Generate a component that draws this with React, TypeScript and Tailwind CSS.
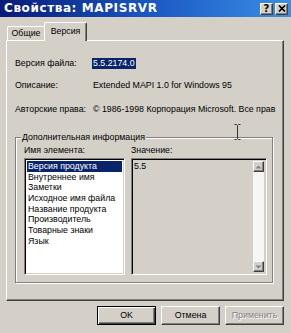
import React from 'react';

const items = [
  'Версия продукта',
  'Внутреннее имя',
  'Заметки',
  'Исходное имя файла',
  'Название продукта',
  'Производитель',
  'Товарные знаки',
  'Язык',
];

const raised = 'border-t border-l border-white border-r border-b border-r-[#404040] border-b-[#404040] shadow-[inset_-1px_-1px_0_#808080]';
const sunken = 'border-t border-l border-[#808080] border-r border-b border-r-white border-b-white shadow-[inset_1px_1px_0_#000,inset_-1px_-1px_0_#d4d0c8]';

function Arrow({ up }: { up?: boolean }) {
  return (
    <svg width="7" height="4" viewBox="0 0 7 4">
      {up ? (
        <path d="M0.5 3.5 L3.5 0.5 L6.5 3.5 Z" fill="#808080" />
      ) : (
        <path d="M0.5 0.5 L3.5 3.5 L6.5 0.5 Z" fill="#808080" />
      )}
    </svg>
  );
}

export default function App() {
  return (
    <div className="w-[291px] h-[333px] bg-[#d4d0c8] flex flex-col overflow-hidden relative text-black font-['Liberation_Sans',Arial,sans-serif] text-[8.8px]">
      {/* title bar */}
      <div className="h-[17px] flex items-center bg-linear-to-r from-[#0a1a78] via-[#1a56c0] to-[#3c8ee6] pl-[4px] pr-[3px]">
        <span className="flex-1 text-white font-bold text-[12px] leading-[13px] tracking-[0.6px] font-['DejaVu_Sans',Verdana,sans-serif]">
          Свойства: MAPISRVR
        </span>
        <div className="flex gap-[2px]">
          <div className={`w-[13px] h-[12px] bg-[#d4d0c8] flex items-center justify-center ${raised}`}>
            <span className="font-bold text-[10px] leading-[10px] font-['DejaVu_Sans',sans-serif]">?</span>
          </div>
          <div className={`w-[13px] h-[12px] bg-[#d4d0c8] flex items-center justify-center ${raised}`}>
            <svg width="8" height="7" viewBox="0 0 8 7">
              <path d="M1 0.5 L7 6.5 M7 0.5 L1 6.5" stroke="#000" strokeWidth="1.7" />
            </svg>
          </div>
        </div>
      </div>

      {/* tabs */}
      <div className="h-[23px] flex items-end pl-[7px]">
        <div className="w-[37px] h-[14px] border-t border-l border-white rounded-tl-[2px] flex items-center justify-center leading-[11px]">
          Общие
        </div>
        <div className="relative z-10 w-[43px] h-[19px] -mb-[1px] bg-[#d4d0c8] border-t border-l border-white border-r border-r-[#404040] shadow-[inset_-1px_0_0_#808080] rounded-t-[2px] flex items-start justify-center pt-[3px] leading-[11px]">
          Версия
        </div>
      </div>

      {/* panel */}
      <div className={`ml-[6px] w-[278px] h-[261px] flex flex-col px-[8px] ${raised}`}>
        <div className="mt-[17px] flex h-[11px] leading-[11px]">
          <span className="w-[78px]">Версия файла:</span>
          <span className="bg-[#0a246a] text-white px-[1px] -ml-[1px]">5.5.2174.0</span>
        </div>
        <div className="mt-[11px] flex h-[11px] leading-[11px]">
          <span className="w-[78px]">Описание:</span>
          <span>Extended MAPI 1.0 for Windows 95</span>
        </div>
        <div className="mt-[13px] flex h-[11px] leading-[11px] whitespace-nowrap">
          <span className="w-[78px] shrink-0">Авторские права:</span>
          <span>© 1986-1998 Корпорация Microsoft. Все прав</span>
        </div>

        <fieldset className="mt-[17px] w-[258px] h-[151px] border border-[#808080] shadow-[inset_1px_1px_0_#fff,1px_1px_0_#fff] flex flex-col">
          <legend className="ml-[5px] px-[1px] leading-[10px] bg-[#d4d0c8]">Дополнительная информация</legend>
          <div className="pt-[3px] pl-[8px] grid grid-cols-[101px_136px] gap-x-[6px]">
            <span className="h-[11px] leading-[11px]">Имя элемента:</span>
            <span className="h-[11px] leading-[11px]">Значение:</span>
            <div className={`mt-[2px] h-[117px] bg-white ${sunken} p-[2px]`}>
              {items.map((it, i) => (
                <div
                  key={it}
                  className={`h-[10.7px] leading-[10.7px] pl-[1px] whitespace-nowrap ${i === 0 ? 'bg-[#0a246a] text-white' : ''}`}
                >
                  {it}
                </div>
              ))}
            </div>
            <div className={`mt-[2px] h-[117px] flex ${sunken} p-[2px]`}>
              <div className="flex-1 leading-[10.7px]">5.5</div>
              <div className="w-[11px] flex flex-col">
                <div className={`h-[11px] bg-[#d4d0c8] flex items-center justify-center ${raised}`}>
                  <Arrow up />
                </div>
                <div className="flex-1 bg-[#f6f6f4]" />
                <div className={`h-[11px] bg-[#d4d0c8] flex items-center justify-center ${raised}`}>
                  <Arrow />
                </div>
              </div>
            </div>
          </div>
        </fieldset>
      </div>

      {/* buttons */}
      <div className="mt-[5px] flex justify-end gap-[5px] pr-[7px]">
        <button className="w-[59px] h-[19px] bg-[#d4d0c8] border border-black shadow-[inset_1px_1px_0_#fff,inset_-1px_-1px_0_#404040,inset_-2px_-2px_0_#808080] leading-[11px]">
          OK
        </button>
        <button className={`w-[59px] h-[19px] bg-[#d4d0c8] leading-[11px] ${raised}`}>Отмена</button>
        <button className={`w-[59px] h-[19px] bg-[#d4d0c8] leading-[11px] text-[#808080] [text-shadow:1px_1px_0_#fff] ${raised}`}>
          Применить
        </button>
      </div>

      {/* I-beam text cursor */}
      <svg className="absolute left-[234px] top-[124px]" width="7" height="16" viewBox="0 0 7 16">
        <path d="M0.5 0.5 H2.5 L3.5 1.5 L4.5 0.5 H6.5 M3.5 1.5 V14.5 M0.5 15.5 H2.5 L3.5 14.5 L4.5 15.5 H6.5" stroke="#333" strokeWidth="1" fill="none" />
      </svg>
    </div>
  );
}
